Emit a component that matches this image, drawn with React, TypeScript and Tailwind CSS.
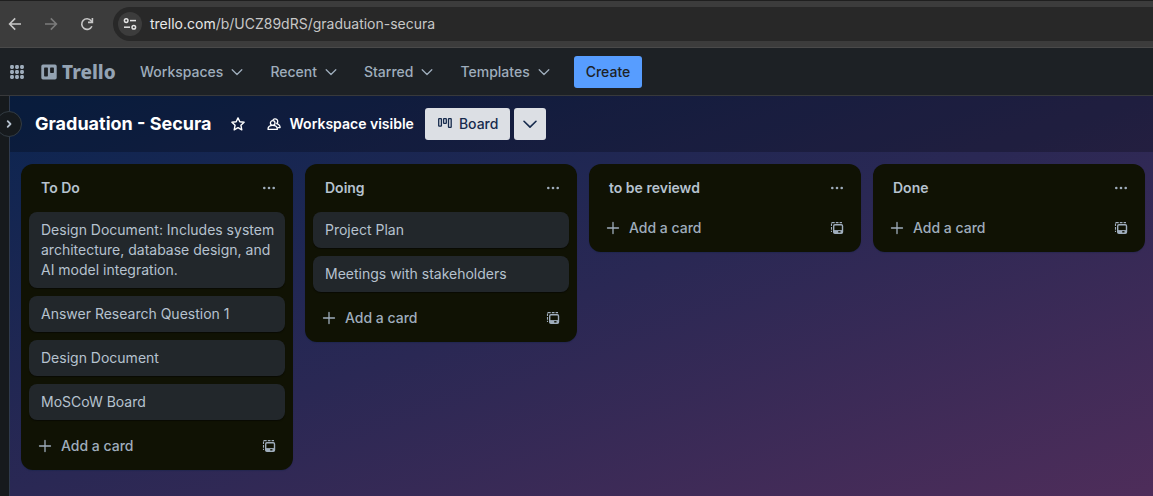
import React from "react";

const NAV = ["Workspaces", "Recent", "Starred", "Templates"];

const LISTS = [
  {
    title: "To Do",
    cards: [
      "Design Document: Includes system architecture, database design, and AI model integration.",
      "Answer Research Question 1",
      "Design Document",
      "MoSCoW Board",
    ],
  },
  { title: "Doing", cards: ["Project Plan", "Meetings with stakeholders"] },
  { title: "to be reviewd", cards: [] },
  { title: "Done", cards: [] },
];

type IconProps = { className?: string };

function Chevron({ className }: IconProps) {
  return (
    <svg viewBox="0 0 16 16" className={className} fill="none" stroke="currentColor" strokeWidth="1.3" strokeLinecap="round" strokeLinejoin="round" aria-hidden="true">
      <path d="M3.200 5.800 8 10.500l4.800-4.700" />
    </svg>
  );
}

function ArrowIcon({ className }: IconProps) {
  return (
    <svg viewBox="0 0 16 16" className={className} fill="none" stroke="currentColor" strokeWidth="1.6" aria-hidden="true">
      <path d="M14 8H3M8.2 2.4 2.6 8l5.6 5.6" />
    </svg>
  );
}

function ReloadIcon() {
  return (
    <svg viewBox="0 0 16 16" className="size-4" fill="none" stroke="currentColor" strokeWidth="1.6" aria-hidden="true">
      <path d="M12.9 10.2A5.3 5.3 0 1 1 12.2 4.8L13.4 6.2" />
      <path d="M13.4 2v4.4H9" />
    </svg>
  );
}

function SiteSettingsIcon() {
  return (
    <svg viewBox="0 0 16 16" className="size-4" fill="none" stroke="currentColor" strokeWidth="1.5" aria-hidden="true">
      <circle cx="4.2" cy="4.6" r="1.8" />
      <path d="M8 4.6h6" />
      <circle cx="11.8" cy="11.2" r="1.8" />
      <path d="M2 11.2h6" />
    </svg>
  );
}

function AppsIcon() {
  return (
    <svg viewBox="0 0 14 14" className="size-3.5" fill="currentColor" aria-hidden="true">
      {[0, 5, 10].map((y) => [0, 5, 10].map((x) => <rect key={`${x}-${y}`} x={x + 0.1} y={y + 0.1} width="3.8" height="3.8" rx="1.3" />))}
    </svg>
  );
}

function TrelloMark() {
  return (
    <svg viewBox="0 0 16 16" className="size-4" aria-hidden="true">
      <path
        fill="currentColor"
        fillRule="evenodd"
        d="M2 .5h12A1.700 1.700 0 0 1 15.700 2.200v11.600A1.700 1.700 0 0 1 14 15.500H2A1.700 1.700 0 0 1 .3 13.800V2.200A1.700 1.700 0 0 1 2 .5ZM3.800 3.400a.7.7 0 0 0-.7.7v7.600c0 .4.3.7.7.7h2.400c.4 0 .7-.3.7-.7V4.100a.7.7 0 0 0-.7-.7ZM9.800 3.400a.7.7 0 0 0-.7.7v4.200c0 .4.3.7.7.7h2.400c.4 0 .7-.3.7-.7V4.100a.7.7 0 0 0-.7-.7Z"
      />
    </svg>
  );
}

function StarIcon() {
  return (
    <svg viewBox="0 0 16 16" className="size-4" fill="none" stroke="currentColor" strokeWidth="1.4" strokeLinejoin="round" aria-hidden="true">
      <path d="m8 1.900 1.800 3.900 4.300.5-3.200 2.900.9 4.600L8 11.600l-3.800 2.200.9-4.600L1.900 6.300l4.300-.5Z" />
    </svg>
  );
}

function MembersIcon() {
  return (
    <svg viewBox="0 0 16 16" className="size-4" fill="none" stroke="currentColor" strokeWidth="1.3" strokeLinejoin="round" aria-hidden="true">
      <circle cx="6.700" cy="7" r="2.300" />
      <path d="M2 13.300c0-2.400 1.800-4 4.700-4s4.700 1.600 4.700 4Z" />
      <path d="M6.900 4.200A2.600 2.600 0 1 1 10.700 7.600c2 .5 3.400 1.900 3.400 4h-2.600" />
    </svg>
  );
}

function BoardIcon() {
  return (
    <svg viewBox="0 0 16 16" className="size-4" fill="none" stroke="currentColor" strokeWidth="1.300" aria-hidden="true">
      <rect x="1.700" y="2.600" width="2.700" height="7.600" rx=".5" />
      <rect x="6.600" y="2.600" width="2.700" height="4.800" rx=".5" />
      <rect x="11.500" y="2.600" width="2.700" height="8.800" rx=".5" />
    </svg>
  );
}

function DotsIcon() {
  return (
    <svg viewBox="0 0 16 16" className="size-4" fill="currentColor" aria-hidden="true">
      <circle cx="3.300" cy="8" r="1.300" />
      <circle cx="8" cy="8" r="1.300" />
      <circle cx="12.700" cy="8" r="1.300" />
    </svg>
  );
}

function PlusIcon() {
  return (
    <svg viewBox="0 0 16 16" className="size-4" fill="none" stroke="currentColor" strokeWidth="1.300" strokeLinecap="round" aria-hidden="true">
      <path d="M8 2.500v11M2.500 8h11" />
    </svg>
  );
}

function TemplateIcon() {
  return (
    <svg viewBox="0 0 16 16" className="size-4" fill="none" stroke="currentColor" aria-hidden="true">
      <rect x="4.700" y="4.700" width="8.800" height="8.600" rx="1.200" strokeWidth="1.400" />
      <path d="M4.700 10.600h8.800" strokeWidth="1" />
      <path d="M4.700 12h4.500M11.500 12h2" strokeWidth="1.800" />
      <path d="M2.500 11.900v-1.200M2.500 9.700V7M2.500 6V3.600M2.500 2.600h3.200M6.800 2.600h2.700M10.600 2.600h2.400" strokeWidth="1.100" />
    </svg>
  );
}

function BoardList({ title, cards }: { title: string; cards: string[] }) {
  return (
    <section className="flex w-[272px] shrink-0 flex-col rounded-xl bg-[#101204] p-2 shadow-[0_1px_1px_#091e4240]">
      <header className="flex h-8 items-center justify-between pl-3">
        <h2 className="text-sm font-semibold">{title}</h2>
        <button type="button" aria-label="List actions" className="flex size-8 items-center justify-center text-[#9fadbc]">
          <DotsIcon />
        </button>
      </header>
      <ul className={cards.length > 0 ? "flex flex-col gap-2 pt-2 pb-2.5" : "pt-2"}>
        {cards.map((card) => (
          <li key={card} className="rounded-lg bg-[#22272b] py-2 pr-1 pl-3 text-sm leading-5 shadow-[0_1px_1px_#03040480]">
            {card}
          </li>
        ))}
      </ul>
      <footer className="flex items-center justify-between text-[#9fadbc]">
        <button type="button" className="flex h-8 items-center gap-2 pl-2 text-sm font-medium">
          <PlusIcon />
          Add a card
        </button>
        <button type="button" aria-label="Create from template" className="flex size-8 items-center justify-center">
          <TemplateIcon />
        </button>
      </footer>
    </section>
  );
}

export default function App() {
  return (
    <div className="flex min-h-screen flex-col overflow-hidden bg-[#1d2125] font-[Inter,'Liberation_Sans',sans-serif] text-[#b6c2cf]">
      <div className="flex h-12 items-center border-t border-b border-t-[#1f1f1f] border-b-[#4a4a4a] bg-[#3c3c3c]">
        <div className="flex items-center gap-5 pl-[7px] text-[#c7c7c7]">
          <button type="button" aria-label="Back"><ArrowIcon className="size-4" /></button>
          <button type="button" aria-label="Forward" className="text-[#7b7b7b]"><ArrowIcon className="size-4 rotate-180" /></button>
          <button type="button" aria-label="Reload"><ReloadIcon /></button>
        </div>
        <div className="ml-[18px] flex h-[34px] flex-1 items-center gap-2 rounded-l-full bg-[#282828] pl-[5px]">
          <button type="button" aria-label="Site information" className="flex size-6 items-center justify-center rounded-full bg-[#3c3c3c] text-[#e3e3e3]">
            <SiteSettingsIcon />
          </button>
          <p className="text-sm text-[#c7c7c7]">
            <span className="text-[#e8e8e8]">trello.com</span>/b/UCZ89dRS/graduation-secura
          </p>
        </div>
      </div>

      <nav className="flex h-12 items-center border-b border-[#38393b] pl-2.5 text-[#9fadbc]">
        <button type="button" aria-label="More apps"><AppsIcon /></button>
        <a href="#home" className="ml-[17px] flex w-[75px] items-center gap-[5px] font-['Noto_Sans',sans-serif] text-[19px] leading-6 font-extrabold text-[#94a3b3]">
          <TrelloMark />
          Trello
        </a>
        <div className="ml-3 flex items-center gap-px">
          {NAV.map((item) => (
            <button key={item} type="button" className="flex h-8 items-center gap-1.5 px-3 text-sm font-medium">
              {item}
              <Chevron className="size-4" />
            </button>
          ))}
        </div>
        <button type="button" className="ml-2.5 h-8 rounded-[3px] bg-[#579dff] px-3 text-sm font-medium text-[#1d2125]">Create</button>
      </nav>

      <div className="flex flex-1">
        <aside className="relative w-2.5 shrink-0 border-r border-[#2f3b4f] bg-[#161a1d]">
          <button type="button" aria-label="Open sidebar" className="absolute top-[15px] -right-[13px] flex size-[26px] items-center justify-center rounded-full border border-[#333c43] bg-[#161a1d] text-[#b6c2cf]">
            <svg viewBox="0 0 16 16" className="size-4" fill="none" stroke="currentColor" strokeWidth="1.800" strokeLinecap="round" strokeLinejoin="round" aria-hidden="true">
              <path d="m6.700 5.200 2.800 2.800-2.800 2.800" />
            </svg>
          </button>
        </aside>
        <main className="flex min-w-0 flex-1 flex-col bg-linear-to-br/srgb from-[#0b2550] via-[#2a2854] to-[#4e2d5a]">
          <div className="flex h-14 items-center bg-[#0000003d] pl-[25px] text-white">
            <h1 className="text-lg font-bold">Graduation - Secura</h1>
            <button type="button" aria-label="Star board" className="ml-2.5 flex size-8 items-center justify-center"><StarIcon /></button>
            <button type="button" className="ml-1 flex h-8 items-center gap-2 px-2 text-sm font-semibold">
              <MembersIcon />
              Workspace visible
            </button>
            <button type="button" className="ml-[3px] flex h-8 items-center gap-1.5 rounded-[3px] bg-[#dcdfe4] px-3 text-sm font-medium text-[#172b4d]">
              <BoardIcon />
              Board
            </button>
            <button type="button" aria-label="Views" className="ml-1 flex size-8 items-center justify-center rounded-[3px] bg-[#dcdfe4] text-[#172b4d]">
              <Chevron className="size-5" />
            </button>
          </div>
          <div className="flex flex-1 items-start gap-3 px-[11px] pt-3 pb-6">
            {LISTS.map((list) => (
              <BoardList key={list.title} {...list} />
            ))}
          </div>
        </main>
      </div>
    </div>
  );
}
